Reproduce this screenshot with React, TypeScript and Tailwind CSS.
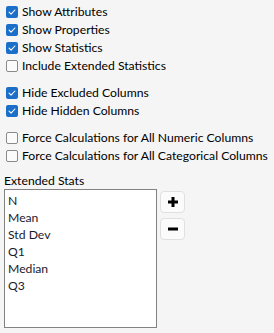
import React from 'react';

const Check: React.FC<{ checked?: boolean }> = ({ checked }) =>
  checked ? (
    <span className="flex h-[12px] w-[12px] shrink-0 items-center justify-center rounded-[2px] bg-[#1b6fc9]">
      <svg viewBox="0 0 12 12" className="h-[10px] w-[10px]">
        <path d="M2.5 6.2 L4.9 8.5 L9.5 3.6" fill="none" stroke="#ffffff" strokeWidth="1.3" strokeLinecap="round" strokeLinejoin="round" />
      </svg>
    </span>
  ) : (
    <span className="h-[12px] w-[12px] shrink-0 rounded-[2px] border border-[#8a8a8a] bg-[#fbfbfb]"></span>
  );

const Row: React.FC<{ label: string; checked?: boolean }> = ({ label, checked }) => (
  <div className="flex h-[18px] items-center gap-[4px] whitespace-nowrap">
    <Check checked={checked} />
    <span>{label}</span>
  </div>
);

const stats = ['N', 'Mean', 'Std Dev', 'Q1', 'Median', 'Q3'];

export default function App() {
  return (
    <div className="h-[333px] w-[274px] bg-[#f5f5f5] pl-[6px] pt-[3px] text-[12.2px] leading-none text-black" style={{ fontFamily: 'Lato, "Noto Sans", sans-serif' }}>
      <Row label="Show Attributes" checked />
      <Row label="Show Properties" checked />
      <Row label="Show Statistics" checked />
      <Row label="Include Extended Statistics" />
      <div className="mt-[9px]">
        <Row label="Hide Excluded Columns" checked />
        <Row label="Hide Hidden Columns" checked />
      </div>
      <div className="mt-[9px]">
        <Row label="Force Calculations for All Numeric Columns" />
        <Row label="Force Calculations for All Categorical Columns" />
      </div>
      <div className="ml-[-2px] mt-[10px]">
        <div className="h-[14px]">Extended Stats</div>
        <div className="flex gap-[3px]">
          <div className="h-[139px] w-[153px] border border-[#828282] bg-white pl-[3px] pt-[2px] text-[#1a1a2e]">
            {stats.map((s) => (
              <div key={s} className="h-[17px] leading-[17px]">{s}</div>
            ))}
          </div>
          <div className="flex flex-col gap-[5px] pt-[2px]">
            <button className="flex h-[22px] w-[25px] items-center justify-center rounded-[4px] border border-[#e0e0e0] bg-[#fbfbfb]">
              <svg viewBox="0 0 12 12" className="h-[12px] w-[12px]">
                <path d="M4.5 1 H7.5 V4.5 H11 V7.5 H7.5 V11 H4.5 V7.5 H1 V4.5 H4.5 Z" fill="#000" />
              </svg>
            </button>
            <button className="flex h-[22px] w-[25px] items-center justify-center rounded-[4px] border border-[#e0e0e0] bg-[#fbfbfb]">
              <svg viewBox="0 0 12 12" className="h-[12px] w-[12px]">
                <rect x="1" y="4.5" width="10" height="3" fill="#000" />
              </svg>
            </button>
          </div>
        </div>
      </div>
    </div>
  );
}
